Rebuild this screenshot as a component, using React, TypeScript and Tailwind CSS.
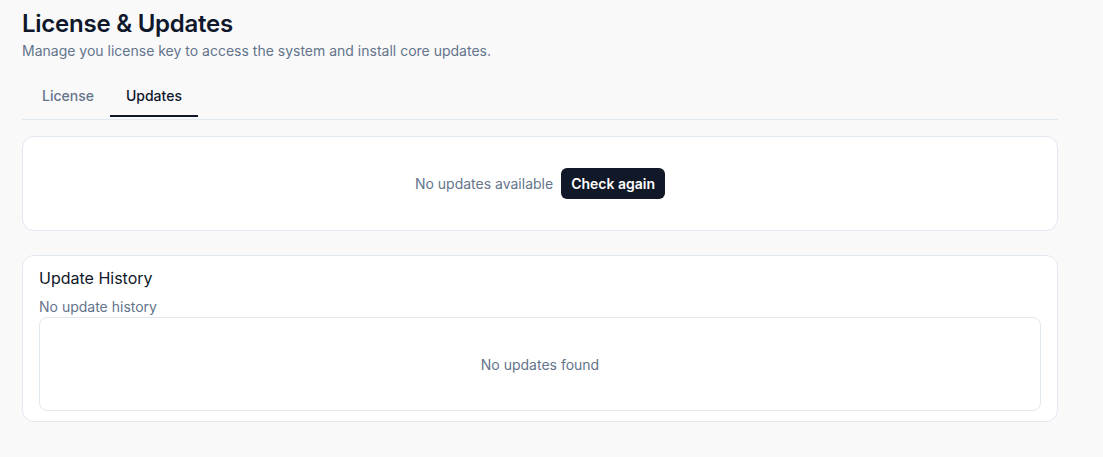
import React from "react";

export default function App() {
  return (
    <div className="min-h-screen w-full bg-[#f9f9fa] text-[#0f172a]" style={{ fontFamily: "Inter, 'Noto Sans', sans-serif" }}>
      <div className="w-[1036px] ml-[22px] pt-[8px]">
        <h1 className="text-[24px] leading-[32px] font-semibold tracking-[-0.01em] text-[#0f172a]">License &amp; Updates</h1>
        <p className="text-[14px] leading-[20px] text-[#64748b] mt-[1px]">
          Manage you license key to access the system and install core updates.
        </p>
        <div className="mt-[16px] border-b border-[#e2e8f0]">
          <div className="flex pl-[4px] pb-[2px]">
            <div className="px-[16px] h-[40px] pb-[2px] flex items-center text-[14px] font-medium text-[#64748b] border-b-2 border-transparent">
              License
            </div>
            <div className="px-[16px] h-[40px] pb-[2px] flex items-center text-[14px] font-medium text-[#0f172a] border-b-2 border-[#0f172a]">
              Updates
            </div>
          </div>
        </div>

        <div className="mt-[16px] h-[95px] rounded-xl border border-[#e2e8f0] bg-white flex items-center justify-center gap-[8px]">
          <span className="text-[14px] text-[#64748b]">No updates available</span>
          <button className="h-[31px] px-[10px] rounded-md bg-[#111827] text-white text-[14px] font-semibold">
            Check again
          </button>
        </div>

        <div className="mt-[24px] rounded-xl border border-[#e2e8f0] bg-white px-[16px] pt-[10px] pb-[10px]">
          <h2 className="text-[16px] leading-[24px] text-[#0f172a]">Update History</h2>
          <p className="text-[14px] leading-[20px] text-[#64748b] mt-[7px]">No update history</p>
          <div className="h-[94px] rounded-lg border border-[#e2e8f0] flex items-center justify-center">
            <span className="text-[14px] text-[#64748b]">No updates found</span>
          </div>
        </div>
      </div>
    </div>
  );
}
